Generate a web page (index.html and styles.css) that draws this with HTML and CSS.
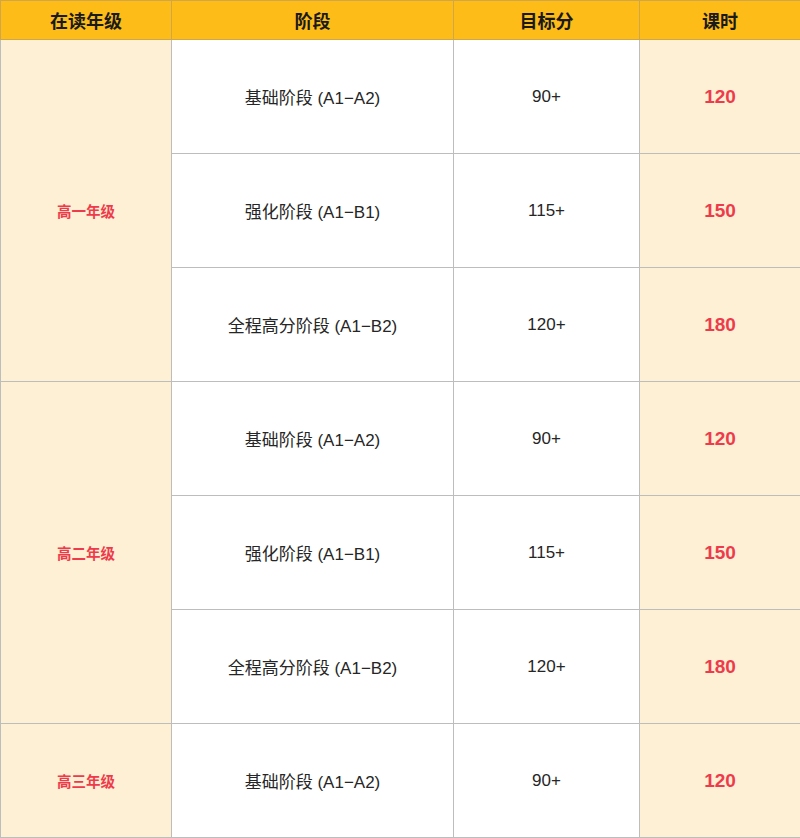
FILE: index.html
```html
<!DOCTYPE html>
<html lang="zh">
<head>
<meta charset="utf-8">
<link rel="stylesheet" href="styles.css">
</head>
<body>
<table class="plan">
  <colgroup>
    <col class="c1"><col class="c2"><col class="c3"><col class="c4">
  </colgroup>
  <thead>
    <tr><th>在读年级</th><th>阶段</th><th>目标分</th><th>课时</th></tr>
  </thead>
  <tbody>
    <tr><td class="grade" rowspan="3">高一年级</td><td>基础阶段 (A1−A2)</td><td>90+</td><td class="hours">120</td></tr>
    <tr><td>强化阶段 (A1−B1)</td><td>115+</td><td class="hours">150</td></tr>
    <tr><td>全程高分阶段 (A1−B2)</td><td>120+</td><td class="hours">180</td></tr>
    <tr><td class="grade" rowspan="3">高二年级</td><td>基础阶段 (A1−A2)</td><td>90+</td><td class="hours">120</td></tr>
    <tr><td>强化阶段 (A1−B1)</td><td>115+</td><td class="hours">150</td></tr>
    <tr><td>全程高分阶段 (A1−B2)</td><td>120+</td><td class="hours">180</td></tr>
    <tr><td class="grade">高三年级</td><td>基础阶段 (A1−A2)</td><td>90+</td><td class="hours">120</td></tr>
  </tbody>
</table>
</body>
</html>
```
FILE: styles.css
```css
html, body {
  margin: 0;
  padding: 0;
  background: #ffffff;
}
.plan {
  border-collapse: collapse;
  table-layout: fixed;
  width: 800px;
  font-family: "Liberation Sans", Arial, "Noto Sans CJK SC", sans-serif;
}
.c1 { width: 171px; }
.c2 { width: 282px; }
.c3 { width: 186px; }
.c4 { width: 161px; }
.plan th, .plan td {
  border: 1px solid #bdbdbd;
  text-align: center;
  vertical-align: middle;
  padding: 0;
}
.plan th {
  background: #fdbc18;
  border-color: #cfa64a;
  height: 38px;
  font-size: 18px;
  font-weight: bold;
  color: #1a1a1a;
}
.plan td {
  height: 113px;
  font-size: 17px;
  color: #262626;
  background: #ffffff;
}
.plan td.grade {
  background: #fef0d4;
  color: #ee3b4c;
  font-weight: bold;
  font-size: 14.5px;
}
.plan td.hours {
  background: #fef0d4;
  color: #ee3b4c;
  font-weight: bold;
  font-size: 19px;
}
```
